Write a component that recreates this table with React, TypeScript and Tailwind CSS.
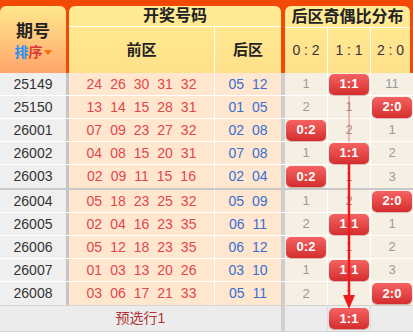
import React from 'react';

type Row = {
  issue: string;
  front: string[];
  back: string[];
  dist: (string | null)[];
  hit: number;
};

const rows: Row[] = [
  { issue: '25149', front: ['24', '26', '30', '31', '32'], back: ['05', '12'], dist: ['1', null, '11'], hit: 1 },
  { issue: '25150', front: ['13', '14', '15', '28', '31'], back: ['01', '05'], dist: ['2', '1', null], hit: 2 },
  { issue: '26001', front: ['07', '09', '23', '27', '32'], back: ['02', '08'], dist: [null, '2', '1'], hit: 0 },
  { issue: '26002', front: ['04', '08', '15', '20', '31'], back: ['07', '08'], dist: ['1', null, '2'], hit: 1 },
  { issue: '26003', front: ['02', '09', '11', '15', '16'], back: ['02', '04'], dist: [null, '1', '3'], hit: 0 },
  { issue: '26004', front: ['05', '18', '23', '25', '32'], back: ['05', '09'], dist: ['1', '2', null], hit: 2 },
  { issue: '26005', front: ['02', '04', '16', '23', '35'], back: ['06', '11'], dist: ['2', null, '1'], hit: 1 },
  { issue: '26006', front: ['05', '12', '18', '23', '35'], back: ['06', '12'], dist: [null, '1', '2'], hit: 0 },
  { issue: '26007', front: ['01', '03', '13', '20', '26'], back: ['03', '10'], dist: ['1', null, '3'], hit: 1 },
  { issue: '26008', front: ['03', '06', '17', '21', '33'], back: ['05', '11'], dist: ['2', '1', null], hit: 2 },
];

const labels = ['0:2', '1:1', '2:0'];
const colW = ['w-[43px]', 'w-[43px]', 'w-[42px]'];

const Badge = ({ text }: { text: string }) => (
  <div className="flex h-[21px] w-[40px] items-center justify-center rounded-[5px] bg-gradient-to-b from-[#f46262] to-[#d42c2c] text-[13px] font-bold text-white shadow-[0_1px_1px_rgba(120,0,0,0.3)]">
    {text}
  </div>
);

const DataRow = ({ row, last }: { row: Row; last: boolean }) => (
  <div className={`flex h-[23px] ${last ? '' : 'border-b border-white'}`}>
    <div className="flex w-[66px] items-center justify-center bg-[#efefef] text-[14px] text-[#333]">
      {row.issue}
    </div>
    <div className="w-[3px] bg-[#c4c4c4]" />
    <div className="flex w-[146px] items-center justify-center gap-[8px] border-r border-white bg-[#ffe6cf] text-[14px] text-[#e04848]">
      {row.front.map((n, i) => (
        <span key={i}>{n}</span>
      ))}
    </div>
    <div className="flex w-[66px] items-center justify-center gap-[8px] bg-[#ffe6cf] text-[14px] text-[#3a6fd0]">
      {row.back.map((n, i) => (
        <span key={i}>{n}</span>
      ))}
    </div>
    <div className="w-[4px] bg-[#cfcfcf]" />
    {row.dist.map((d, i) => (
      <div
        key={i}
        className={`flex ${colW[i]} items-center justify-center bg-[#f6f0e4] text-[13px] text-[#9a9a9a] ${i < 2 ? 'border-r border-white' : ''}`}
      >
        {i === row.hit ? <Badge text={labels[i]} /> : d}
      </div>
    ))}
  </div>
);

export default function App() {
  const top = rows.slice(0, 5);
  const bottom = rows.slice(5);

  return (
    <div className="relative h-[336px] w-[413px] overflow-hidden bg-white font-['Liberation_Sans','Noto_Sans_CJK_SC',sans-serif]">
      {/* header */}
      <div className="flex h-[73px] bg-[#f24a06] pt-[6px]">
        <div className="flex w-[66px] flex-col items-center justify-center rounded-t-[6px] bg-gradient-to-b from-[#ffe88e] to-[#ffa46a] pt-[4px]">
          <div className="text-[17px] font-bold leading-[20px] text-[#222]">期号</div>
          <div className="mt-[1px] flex items-center text-[14px] font-bold leading-[18px]">
            <span className="text-[#2a8ff0]">排</span>
            <span className="text-[#d83a3a]">序</span>
            <span className="ml-[1px] mt-[1px] h-0 w-0 border-x-[4px] border-t-[5px] border-x-transparent border-t-[#ff6a10]" />
          </div>
        </div>
        <div className="w-[3px]" />
        <div className="flex w-[212px] flex-col rounded-t-[6px] bg-gradient-to-b from-[#ffec94] to-[#ffe08a]">
          <div className="flex h-[21px] items-center justify-center border-b border-white text-[16px] font-bold text-[#222]">
            开奖号码
          </div>
          <div className="flex flex-1">
            <div className="flex w-[146px] items-center justify-center border-r border-white text-[15px] font-bold text-[#222]">
              前区
            </div>
            <div className="flex flex-1 items-center justify-center text-[15px] font-bold text-[#222]">
              后区
            </div>
          </div>
        </div>
        <div className="w-[4px]" />
        <div className="flex w-[125px] flex-col rounded-t-[6px] bg-gradient-to-b from-[#ffec94] to-[#ffe08a]">
          <div className="flex h-[22px] items-center justify-center border-b border-white text-[16px] font-bold text-[#222]">
            后区奇偶比分布
          </div>
          <div className="flex flex-1 text-[14px] text-[#3a2f3a]">
            <div className="flex w-[43px] items-center justify-center border-r border-white">0 : 2</div>
            <div className="flex w-[43px] items-center justify-center border-r border-white">1 : 1</div>
            <div className="flex flex-1 items-center justify-center">2 : 0</div>
          </div>
        </div>
      </div>

      {/* data */}
      {top.map((r, i) => (
        <DataRow key={r.issue} row={r} last={i === top.length - 1} />
      ))}
      <div className="h-[2px] bg-[#c8c8c8]" />
      {bottom.map((r, i) => (
        <DataRow key={r.issue} row={r} last={i === bottom.length - 1} />
      ))}

      {/* preselect row */}
      <div className="flex h-[27px] border-y border-[#d4d4d4] bg-[#ececec]">
        <div className="flex w-[281px] items-center justify-center text-[14px] text-[#b03434]">预选行1</div>
        <div className="w-[4px] bg-[#d0d0d0]" />
        <div className="w-[43px] border-r border-[#dcdcdc]" />
        <div className="flex w-[43px] items-center justify-center border-r border-[#dcdcdc]">
          <Badge text="1:1" />
        </div>
        <div className="w-[42px]" />
      </div>

      {/* trend line */}
      <svg className="pointer-events-none absolute left-0 top-0" width="413" height="336">
        <line x1="349" y1="96" x2="349" y2="142" stroke="rgba(240,70,70,0.35)" strokeWidth="2" />
        <line x1="349" y1="164" x2="349" y2="297" stroke="#f01a1a" strokeWidth="2.5" />
        <polygon points="343,295 355,295 349,309" fill="#f01a1a" />
      </svg>
    </div>
  );
}
